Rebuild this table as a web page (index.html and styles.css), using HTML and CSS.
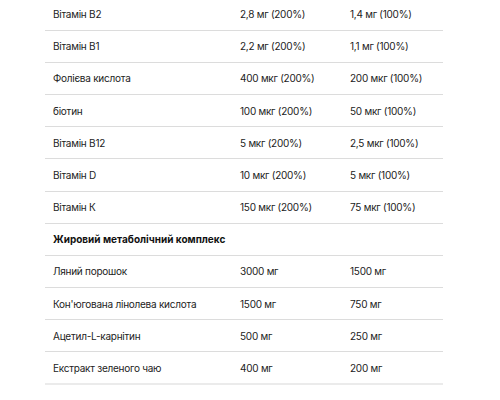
FILE: index.html
```html
<!DOCTYPE html>
<html lang="uk">
<head>
<meta charset="utf-8">
<link rel="stylesheet" href="styles.css">
</head>
<body>
<div class="wrap">
<table class="facts">
<tbody>
<tr><td>Вітамін В2</td><td>2,8 мг (200%)</td><td>1,4 мг (100%)</td></tr>
<tr><td>Вітамін В1</td><td>2,2 мг (200%)</td><td>1,1 мг (100%)</td></tr>
<tr><td>Фолієва кислота</td><td>400 мкг (200%)</td><td>200 мкг (100%)</td></tr>
<tr><td>біотин</td><td>100 мкг (200%)</td><td>50 мкг (100%)</td></tr>
<tr><td>Вітамін В12</td><td>5 мкг (200%)</td><td>2,5 мкг (100%)</td></tr>
<tr><td>Вітамін D</td><td>10 мкг (200%)</td><td>5 мкг (100%)</td></tr>
<tr><td>Вітамін К</td><td>150 мкг (200%)</td><td>75 мкг (100%)</td></tr>
<tr class="head"><td colspan="3">Жировий метаболічний комплекс</td></tr>
<tr><td>Ляний порошок</td><td>3000 мг</td><td>1500 мг</td></tr>
<tr><td>Кон'югована лінолева кислота</td><td>1500 мг</td><td>750 мг</td></tr>
<tr><td>Ацетил-L-карнітин</td><td>500 мг</td><td>250 мг</td></tr>
<tr class="last"><td>Екстракт зеленого чаю</td><td>400 мг</td><td>200 мг</td></tr>
</tbody>
</table>
</div>
</body>
</html>
```
FILE: styles.css
```css
html, body {
  margin: 0;
  padding: 0;
  background: #fff;
}
body {
  font-family: Inter, "Noto Sans", sans-serif;
  font-size: 10px;
  color: #222;
}
.wrap {
  margin: -2px 0 0 45px;
  width: 398px;
}
.facts {
  width: 100%;
  border-collapse: collapse;
  table-layout: fixed;
}
.facts td {
  height: 32.18px;
  box-sizing: border-box;
  padding: 0 0 0 8px;
  border-bottom: 1px solid #dcdcdc;
  vertical-align: middle;
  white-space: nowrap;
  letter-spacing: -0.25px;
}
.facts td:nth-child(1) { width: 187px; }
.facts td:nth-child(2) { width: 110px; }
.head td {
  font-weight: 700;
  color: #111;
  letter-spacing: 0;
}
.last td {
  border-bottom: 2px solid #ebebeb;
}
```
